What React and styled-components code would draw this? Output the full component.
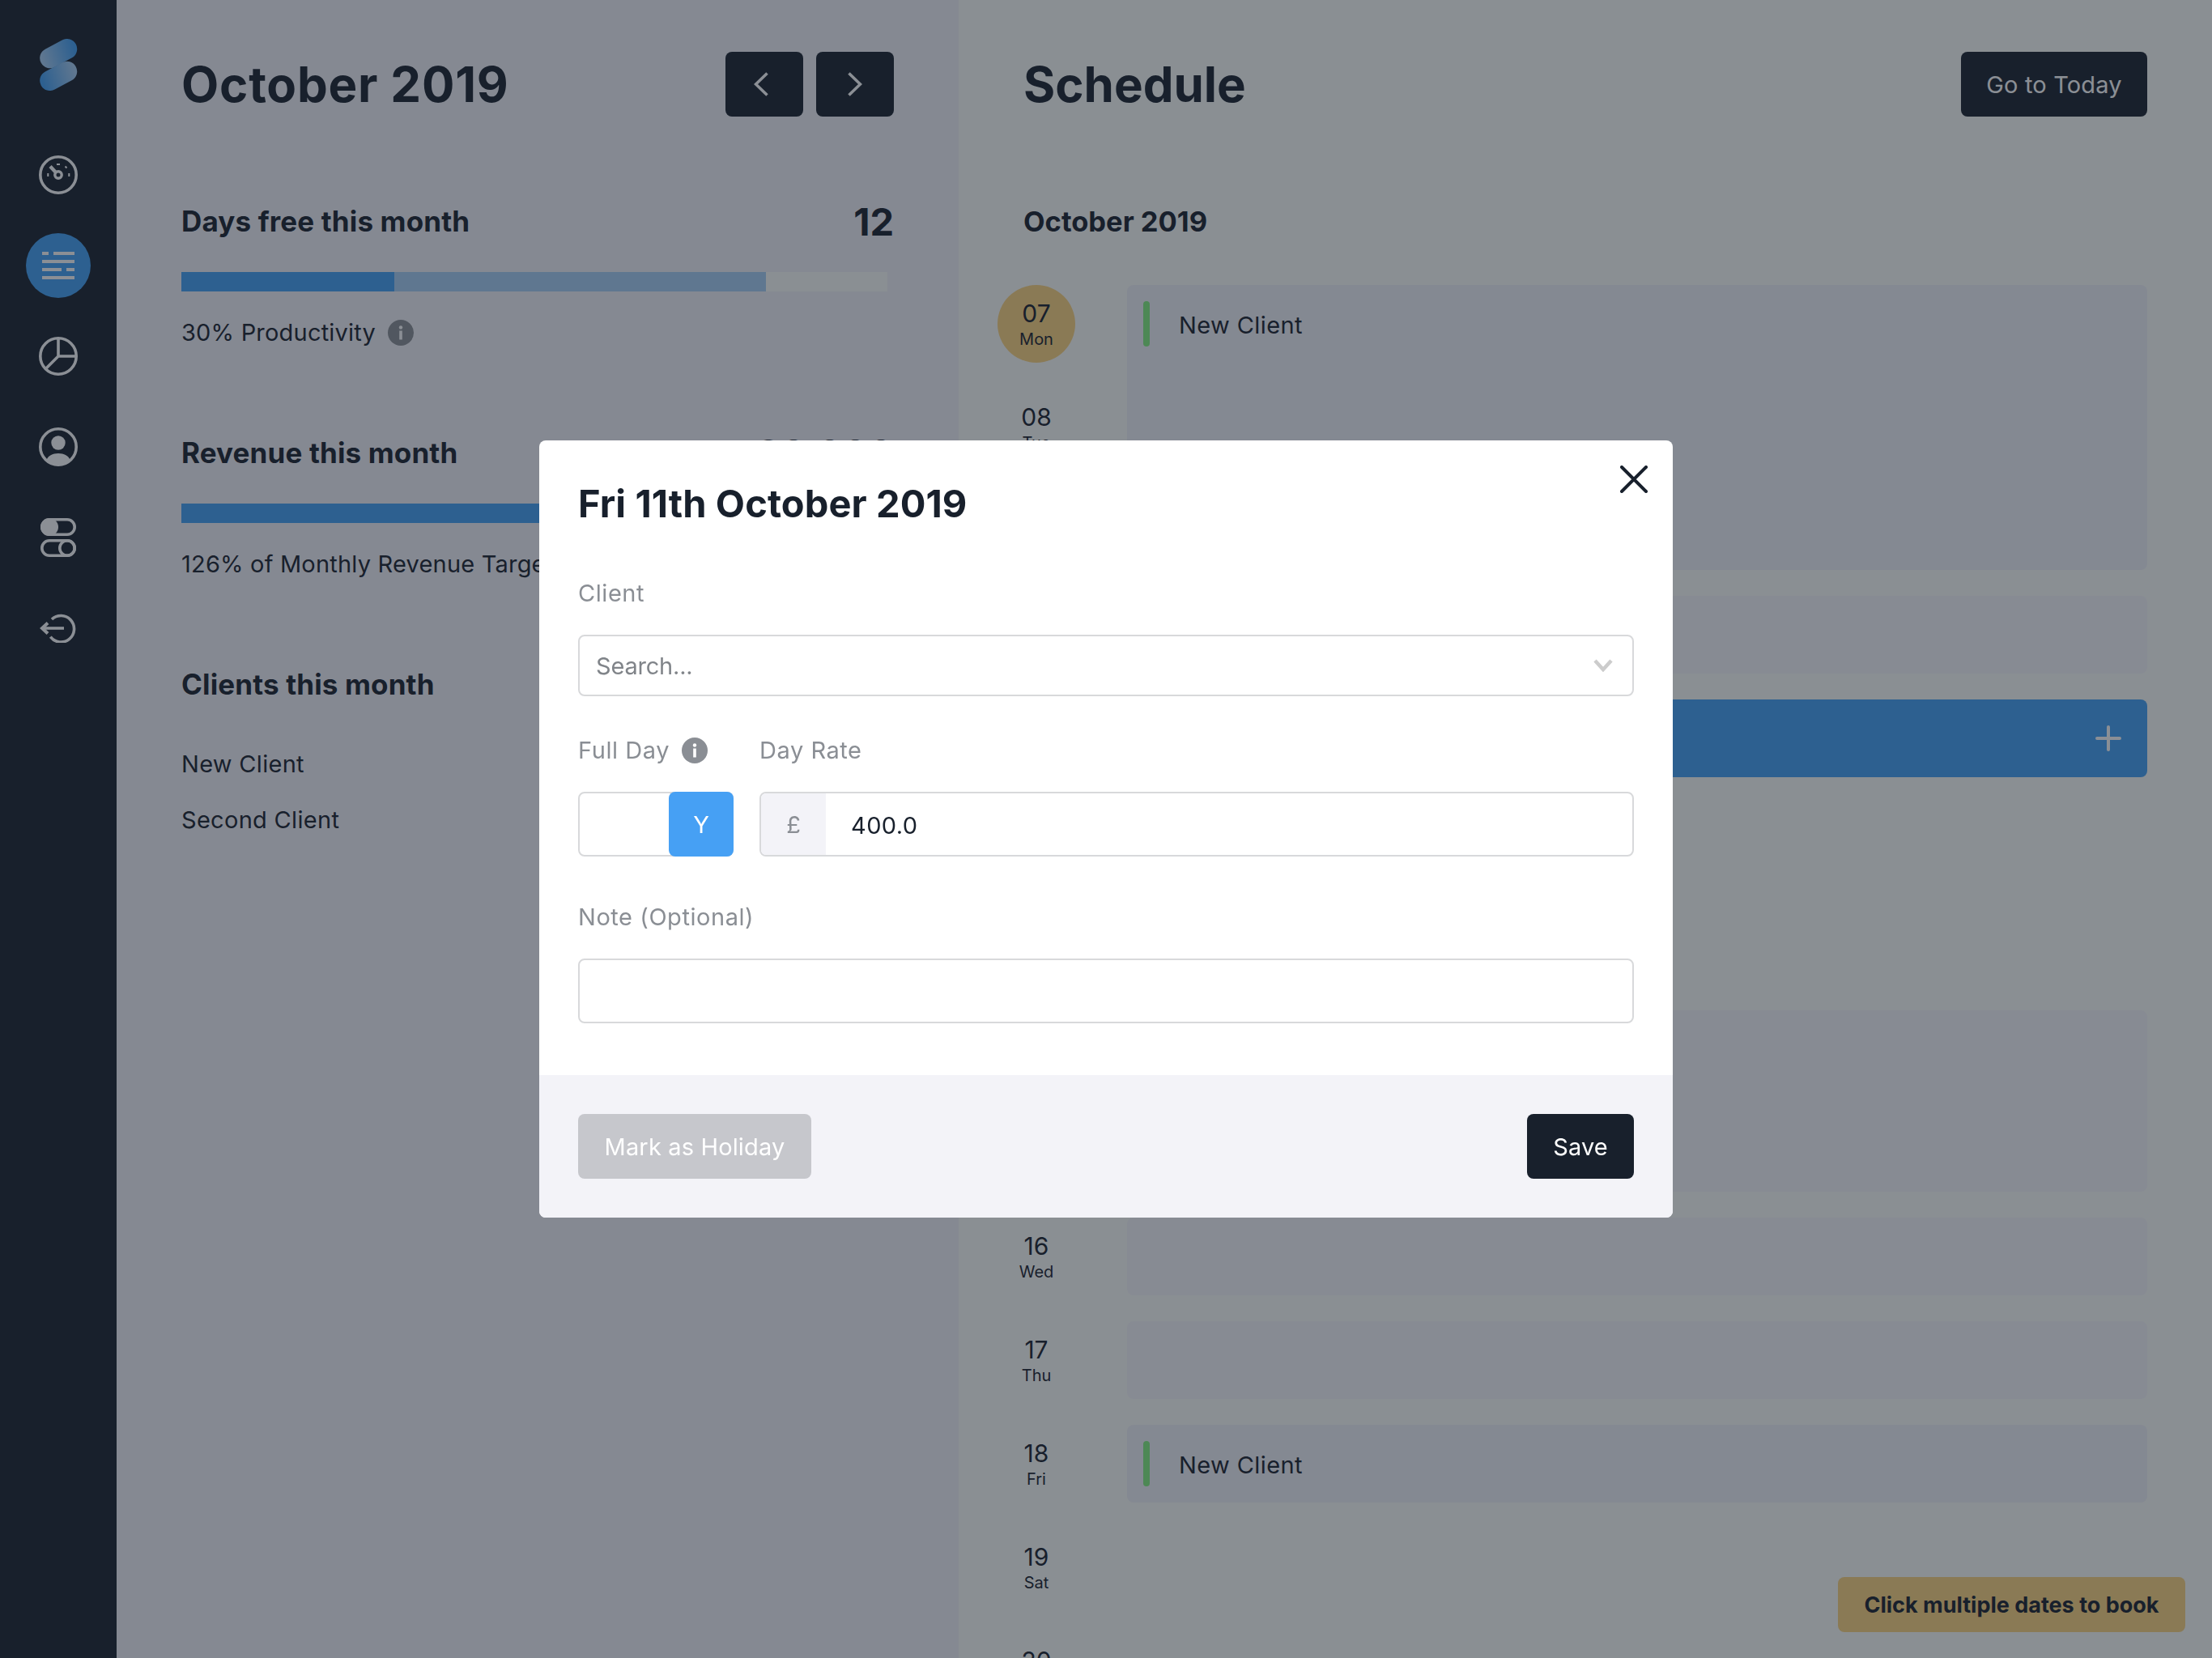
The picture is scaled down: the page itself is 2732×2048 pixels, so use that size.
import React from "react";
import styled, { createGlobalStyle } from "styled-components";

const GlobalStyle = createGlobalStyle`
  * { box-sizing: border-box; }
  html, body { margin: 0; padding: 0; }
  body {
    font-family: "Inter", "Liberation Sans", sans-serif;
    color: #18202c;
    overflow: hidden;
  }
`;

const Page = styled.div`
  display: grid;
  grid-template-columns: 144px 1040px 1fr;
  height: 2048px;
  overflow: hidden;
`;

const Sidebar = styled.nav`
  background: #18202c;
  display: flex;
  flex-direction: column;
  align-items: center;
  padding-top: 48px;
`;

const Logo = styled.svg`
  width: 48px;
  height: 64px;
  margin-bottom: 64px;
`;

const NavList = styled.div`
  display: flex;
  flex-direction: column;
  gap: 32px;
`;

const NavItem = styled.div`
  width: 80px;
  height: 80px;
  border-radius: 50%;
  display: flex;
  align-items: center;
  justify-content: center;
  background: ${(p) => (p.$active ? "#42a0f4" : "transparent")};
  color: #fff;
`;

const LeftPanel = styled.section`
  background: #f3f3f8;
  padding: 64px 80px;
`;

const RightPanel = styled.section`
  background: #fdfefb;
  padding: 64px 80px;
`;

const Header = styled.header`
  height: 80px;
  display: flex;
  align-items: center;
  justify-content: space-between;
`;

const Title = styled.h1`
  margin: 0;
  font-size: 60px;
  font-weight: 700;
  letter-spacing: ${(p) => p.$spacing || "0"};
`;

const NavButtons = styled.div`
  display: flex;
  gap: 16px;
`;

const Button = styled.button`
  height: 80px;
  width: ${(p) => p.$width || "auto"};
  padding: 0;
  border: 0;
  border-radius: 8px;
  background: ${(p) => p.$bg || "#18202c"};
  color: #fff;
  font: 400 29px "Inter", sans-serif;
  letter-spacing: 0.15px;
  display: flex;
  align-items: center;
  justify-content: center;
`;

const ChevronIcon = styled.svg`
  width: 18px;
  height: 30px;
  margin-right: ${(p) => p.$shift || 0}px;
`;

const Section = styled.div`
  margin-top: ${(p) => p.$top || 100}px;
`;

const SectionHead = styled.div`
  height: 60px;
  display: flex;
  align-items: center;
  justify-content: space-between;
`;

const Heading = styled.h2`
  margin: 0;
  font-size: 35px;
  font-weight: 700;
  letter-spacing: 0.15px;
`;

const Stat = styled.span`
  font-size: 47px;
  font-weight: 700;
`;

const Track = styled.div`
  width: 872px;
  height: 24px;
  margin-top: 33px;
  background: #fdfefb;
  position: relative;
  display: flex;
`;

const Segment = styled.div`
  height: 100%;
  background: ${(p) => p.$color};
`;

const Caption = styled.div`
  margin-top: 33px;
  height: 36px;
  font-size: 29px;
  line-height: 38px;
  letter-spacing: 0.2px;
  display: flex;
  align-items: center;
  gap: 15px;
  white-space: nowrap;
`;

const ClientName = styled.div`
  height: 36px;
  margin-top: ${(p) => p.$top}px;
  font-size: 29px;
  line-height: 38px;
  letter-spacing: 0.3px;
`;

const Month = styled.h2`
  margin: 99px 0 0;
  height: 60px;
  line-height: 62px;
  font-size: 34.5px;
  font-weight: 700;
`;

const Schedule = styled.div`
  margin: 49px 0 0 -32px;
  display: grid;
  grid-template-columns: 96px 1fr;
  grid-auto-rows: 96px;
  column-gap: 64px;
  row-gap: 32px;
`;

const DateBlock = styled.div`
  grid-column: 1;
  grid-row: ${(p) => p.$row};
  border-radius: 50%;
  background: ${(p) => (p.$today ? "#fcd47e" : "transparent")};
  display: flex;
  flex-direction: column;
  align-items: center;
  padding-top: 15px;
`;

const DateNum = styled.span`
  font-size: 30px;
  line-height: 40px;
`;

const DateDay = styled.span`
  font-size: 20px;
  line-height: 24px;
`;

const Slot = styled.div`
  grid-column: 2;
  grid-row: ${(p) => p.$row} / span ${(p) => p.$span || 1};
  border-radius: 8px;
  background: ${(p) => (p.$booked ? "#42a0f4" : p.$client ? "#f1f2f8" : "#f7f7fa")};
  position: relative;
  display: flex;
  align-items: flex-start;
  justify-content: ${(p) => (p.$booked ? "flex-end" : "flex-start")};
  padding: ${(p) => (p.$booked ? "32px 32px 0 0" : "20px 0 0 20px")};
`;

const ClientMark = styled.span`
  width: 8px;
  height: 56px;
  border-radius: 4px;
  background: #82f07e;
  margin-right: 36px;
`;

const SlotLabel = styled.span`
  font-size: 29px;
  line-height: 60px;
  letter-spacing: 0.4px;
`;

const Tip = styled.div`
  position: fixed;
  right: 33px;
  bottom: 32px;
  width: 429px;
  height: 68px;
  border-radius: 8px;
  background: #fcd47e;
  font-size: 27px;
  font-weight: 700;
  display: flex;
  align-items: center;
  justify-content: center;
  white-space: nowrap;
`;

const Overlay = styled.div`
  position: fixed;
  inset: 0;
  background: rgba(24, 32, 44, 0.5);
  display: flex;
  align-items: center;
  justify-content: center;
`;

const Modal = styled.div`
  position: relative;
  width: 1400px;
  height: 960px;
  border-radius: 8px;
  background: #fff;
  overflow: hidden;
  display: flex;
  flex-direction: column;
`;

const CloseButton = styled.svg`
  position: absolute;
  top: 31px;
  right: 31px;
  width: 34px;
  height: 34px;
`;

const ModalBody = styled.div`
  flex: 1;
  padding: 48px 48px 0;
`;

const ModalTitle = styled.h2`
  margin: 0;
  height: 60px;
  line-height: 60px;
  font-size: 47px;
  font-weight: 700;
  letter-spacing: 0.1px;
`;

const Field = styled.div`
  margin-top: ${(p) => p.$top}px;
`;

const Label = styled.div`
  height: 36px;
  margin-bottom: 33px;
  font-size: 29px;
  line-height: 38px;
  letter-spacing: 0.55px;
  color: #8a8e94;
  display: flex;
  align-items: center;
  gap: 15px;
`;

const Box = styled.div`
  height: ${(p) => p.$height || 80}px;
  border: 2px solid #d8d9db;
  border-radius: 8px;
  background: #fff;
  display: flex;
  align-items: center;
  overflow: hidden;
`;

const SearchBox = styled(Box)`
  justify-content: space-between;
  padding: 0 24px 0 20px;
  font-size: 29px;
  letter-spacing: -0.2px;
  color: #808489;
`;

const TwoCols = styled.div`
  display: grid;
  grid-template-columns: 192px 1fr;
  column-gap: 32px;
  margin-top: 49px;
`;

const Toggle = styled(Box)`
  justify-content: flex-end;
  overflow: visible;
`;

const ToggleKnob = styled.div`
  width: 80px;
  height: 80px;
  margin-right: -2px;
  border-radius: 8px;
  background: #46a0f4;
  color: #fff;
  font-size: 29px;
  display: flex;
  align-items: center;
  justify-content: center;
`;

const Prefix = styled.div`
  width: 80px;
  height: 100%;
  background: #f3f3f8;
  color: #8a8e94;
  font-size: 29px;
  display: flex;
  align-items: center;
  justify-content: center;
`;

const RateValue = styled.div`
  padding-left: 31px;
  padding-top: 2px;
  font-size: 29px;
  letter-spacing: 0.4px;
`;

const ModalFooter = styled.footer`
  height: 176px;
  background: #f3f3f8;
  padding: 48px;
  display: flex;
  justify-content: space-between;
`;

const GaugeIcon = () => (
  <svg width="48" height="48" viewBox="0 0 48 48" fill="none" stroke="currentColor" strokeWidth="3.6">
    <circle cx="24" cy="24" r="22.2" />
    <circle cx="24" cy="24" r="4.2" strokeWidth="3.4" />
    <path d="M21 21 L14 13.5" strokeWidth="4.4" />
    <path d="M22 11 H26 M32.5 13.5 L34.5 15.5 M37.3 22 V26 M11.3 22 V26" strokeWidth="2" />
  </svg>
);

const ListIcon = () => (
  <svg width="40" height="34" viewBox="0 0 40 34" fill="currentColor">
    <rect x="0" y="0" width="8" height="4" />
    <rect x="14" y="0" width="26" height="4" />
    <rect x="0" y="10" width="40" height="4" />
    <rect x="0" y="20" width="24" height="4" />
    <rect x="30" y="20" width="10" height="4" />
    <rect x="0" y="30" width="40" height="4" />
  </svg>
);

const PieIcon = () => (
  <svg width="48" height="48" viewBox="0 0 48 48" fill="none" stroke="currentColor" strokeWidth="3.6">
    <circle cx="24" cy="24" r="22.2" />
    <path d="M24 1.8 V24 H46.2 M24 24 L8 40" />
  </svg>
);

const UserIcon = () => (
  <svg width="48" height="48" viewBox="0 0 48 48" fill="none" stroke="currentColor" strokeWidth="3.6">
    <circle cx="24" cy="24" r="22.2" />
    <circle cx="24" cy="19" r="8.7" fill="currentColor" stroke="none" />
    <path d="M9 41 C11 35 17 32 24 32 C31 32 37 35 39 41 A23 23 0 0 1 9 41 Z" fill="currentColor" stroke="none" />
  </svg>
);

const TogglesIcon = () => (
  <svg width="44" height="48" viewBox="0 0 44 48" fill="none" stroke="currentColor" strokeWidth="3.6">
    <rect x="1.8" y="1.8" width="40.4" height="18.4" rx="9.2" />
    <circle cx="11" cy="11" r="11" fill="currentColor" stroke="none" />
    <rect x="1.8" y="27.8" width="40.4" height="18.4" rx="9.2" />
    <circle cx="33" cy="37" r="9.2" />
  </svg>
);

const LogoutIcon = () => (
  <svg width="46" height="36" viewBox="0 0 46 36" fill="none" stroke="currentColor" strokeWidth="3.6">
    <path d="M15 7 A16.3 16.3 0 1 1 13.3 28.7" />
    <path d="M3 18 H30" />
    <path d="M10 11.5 L3 18 L10 24.5" strokeWidth="4" />
  </svg>
);

const InfoDot = () => (
  <svg width="32" height="32" viewBox="0 0 32 32">
    <circle cx="16" cy="16" r="16" fill="#8a8e94" />
    <circle cx="16" cy="9.5" r="2.2" fill="#fff" />
    <rect x="14.2" y="13.5" width="3.6" height="11" fill="#fff" />
  </svg>
);

const navItems = [
  { id: "dash", icon: <GaugeIcon /> },
  { id: "schedule", icon: <ListIcon />, active: true },
  { id: "reports", icon: <PieIcon /> },
  { id: "profile", icon: <UserIcon /> },
  { id: "settings", icon: <TogglesIcon /> },
  { id: "logout", icon: <LogoutIcon /> },
];

const days = [
  ["07", "Mon"], ["08", "Tue"], ["09", "Wed"], ["10", "Thu"], ["11", "Fri"],
  ["12", "Sat"], ["13", "Sun"], ["14", "Mon"], ["15", "Tue"], ["16", "Wed"],
  ["17", "Thu"], ["18", "Fri"], ["19", "Sat"], ["20", "Sun"],
];

const slots = [
  { row: 1, span: 3, client: "New Client" },
  { row: 4 },
  { row: 5, booked: true },
  { row: 8, span: 2 },
  { row: 10 },
  { row: 11 },
  { row: 12, client: "New Client" },
];

const App = () => {
  return (
    <>
      <GlobalStyle />
      <Page>
        <Sidebar>
          <Logo viewBox="0 0 48 64" fill="none" strokeWidth="25" strokeLinecap="round">
            <defs>
              <linearGradient id="logoTop" gradientUnits="userSpaceOnUse" x1="4" y1="24" x2="44" y2="12">
                <stop offset="0" stopColor="#a6cef4" />
                <stop offset="1" stopColor="#42a0f4" />
              </linearGradient>
              <linearGradient id="logoBottom" gradientUnits="userSpaceOnUse" x1="4" y1="52" x2="44" y2="40">
                <stop offset="0" stopColor="#42a0f4" />
                <stop offset="1" stopColor="#a6cef4" />
              </linearGradient>
            </defs>
            <path d="M13.7 23.7 L34.7 12.5" stroke="url(#logoTop)" />
            <path d="M13.7 51.5 L34.7 40.3" stroke="url(#logoBottom)" />
          </Logo>
          <NavList>
            {navItems.map((item) => (
              <NavItem key={item.id} $active={item.active}>
                {item.icon}
              </NavItem>
            ))}
          </NavList>
        </Sidebar>

        <LeftPanel>
          <Header>
            <Title $spacing="0.8px">October 2019</Title>
            <NavButtons>
              <Button $width="96px">
                <ChevronIcon $shift={8} viewBox="0 0 18 30" fill="none" stroke="currentColor" strokeWidth="3.6">
                  <path d="M16.5 1.5 L2.5 15 L16.5 28.5" />
                </ChevronIcon>
              </Button>
              <Button $width="96px">
                <ChevronIcon viewBox="0 0 18 30" fill="none" stroke="currentColor" strokeWidth="3.6">
                  <path d="M1.5 1.5 L15.5 15 L1.5 28.5" />
                </ChevronIcon>
              </Button>
            </NavButtons>
          </Header>

          <Section $top={99}>
            <SectionHead>
              <Heading>Days free this month</Heading>
              <Stat>12</Stat>
            </SectionHead>
            <Track>
              <Segment $color="#42a0f4" style={{ width: "30.2%" }} />
              <Segment $color="#a6cef4" style={{ width: "52.6%" }} />
            </Track>
            <Caption>30% Productivity <InfoDot /></Caption>
          </Section>

          <Section>
            <SectionHead>
              <Heading>Revenue this month</Heading>
              <Stat>80,000</Stat>
            </SectionHead>
            <Track>
              <Segment $color="#42a0f4" style={{ width: "100%" }} />
            </Track>
            <Caption>126% of Monthly Revenue Target</Caption>
          </Section>

          <Section>
            <SectionHead>
              <Heading>Clients this month</Heading>
            </SectionHead>
            <ClientName $top={50}>New Client</ClientName>
            <ClientName $top={33}>Second Client</ClientName>
          </Section>
        </LeftPanel>

        <RightPanel>
          <Header>
            <Title>Schedule</Title>
            <Button $width="230px">Go to Today</Button>
          </Header>
          <Month>October 2019</Month>
          <Schedule>
            {days.map(([num, day], i) => (
              <DateBlock key={num} $row={i + 1} $today={i === 0}>
                <DateNum>{num}</DateNum>
                <DateDay>{day}</DateDay>
              </DateBlock>
            ))}
            {slots.map((slot) => (
              <Slot
                key={slot.row}
                $row={slot.row}
                $span={slot.span}
                $booked={slot.booked}
                $client={!!slot.client}
              >
                {slot.client && (
                  <>
                    <ClientMark />
                    <SlotLabel>{slot.client}</SlotLabel>
                  </>
                )}
                {slot.booked && (
                  <svg width="32" height="32" viewBox="0 0 32 32" stroke="#fff" strokeWidth="4" strokeLinecap="round">
                    <path d="M16 2 V30 M2 16 H30" />
                  </svg>
                )}
              </Slot>
            ))}
          </Schedule>
        </RightPanel>
      </Page>

      <Tip>Click multiple dates to book</Tip>

      <Overlay>
        <Modal>
          <CloseButton viewBox="0 0 34 34" stroke="#18202c" strokeWidth="4" strokeLinecap="round">
            <path d="M2 2 L32 32 M32 2 L2 32" />
          </CloseButton>
          <ModalBody>
            <ModalTitle>Fri 11th October 2019</ModalTitle>
            <Field $top={63}>
              <Label>Client</Label>
              <SearchBox $height={76}>
                Search...
                <svg width="24" height="16" viewBox="0 0 24 16" fill="none" stroke="#cccccc" strokeWidth="4.5">
                  <path d="M2 2 L12 13 L22 2" />
                </svg>
              </SearchBox>
            </Field>
            <TwoCols>
              <div>
                <Label>Full Day <InfoDot /></Label>
                <Toggle>
                  <ToggleKnob>Y</ToggleKnob>
                </Toggle>
              </div>
              <div>
                <Label>Day Rate</Label>
                <Box>
                  <Prefix>£</Prefix>
                  <RateValue>400.0</RateValue>
                </Box>
              </div>
            </TwoCols>
            <Field $top={57}>
              <Label>Note (Optional)</Label>
              <Box />
            </Field>
          </ModalBody>
          <ModalFooter>
            <Button $width="288px" $bg="#c6c7cc">Mark as Holiday</Button>
            <Button $width="132px">Save</Button>
          </ModalFooter>
        </Modal>
      </Overlay>
    </>
  );
};

export default App;
